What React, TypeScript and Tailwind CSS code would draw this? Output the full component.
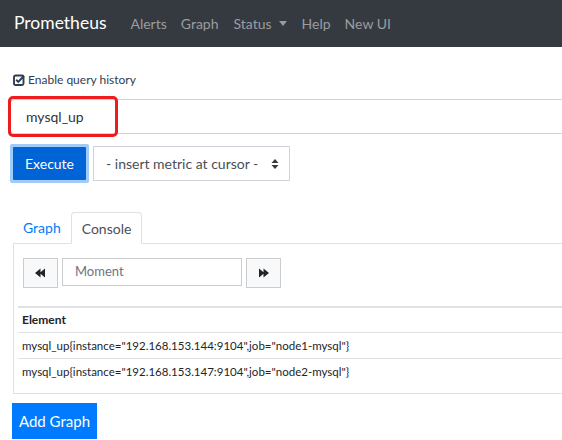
import React from 'react';

const font = { fontFamily: 'Lato, "Noto Sans", "Liberation Sans", sans-serif' };

const CheckSquare: React.FC = () => (
    <svg width="12" height="12" viewBox="0 0 12 12" className="shrink-0">
        <rect x="1" y="1.5" width="9.5" height="9.5" rx="1.5" fill="none" stroke="#2e3d4f" strokeWidth="1.9" />
        <path d="M3.2 5.8 L5.3 7.9 L11 1.8" fill="none" stroke="#2e3d4f" strokeWidth="2" />
    </svg>
);

const App: React.FC = () => {
    const rows = [
        'mysql_up{instance="192.168.153.144:9104",job="node1-mysql"}',
        'mysql_up{instance="192.168.153.147:9104",job="node2-mysql"}',
    ];

    return (
        <div className="w-[562px] h-[440px] overflow-hidden bg-white" style={font}>
            {/* navbar */}
            <div className="h-[47px] bg-[#343a40] flex items-center pl-[14px]">
                <span className="text-[17.5px] text-white mr-[24px]">Prometheus</span>
                <div className="flex items-center text-[14px] text-[#9a9da0]">
                    <span>Alerts</span>
                    <span className="ml-[14px]">Graph</span>
                    <span className="ml-[15px] flex items-center">
                        Status
                        <span className="ml-[7px] w-0 h-0 border-l-[4px] border-r-[4px] border-t-[5px] border-l-transparent border-r-transparent border-t-[#9a9da0]" />
                    </span>
                    <span className="ml-[15px]">Help</span>
                    <span className="ml-[14px]">New UI</span>
                </div>
            </div>

            <div className="w-[620px] pl-[10px]">
                <div className="flex items-center gap-[3px] h-[18px] mt-[24px] pl-[3px] text-[12px] text-[#2e3d4f]">
                    <CheckSquare />
                    <span>Enable query history</span>
                </div>

                {/* expression input */}
                <div className="relative mt-[10px]">
                    <div className="h-[35px] border border-[#ced4da] rounded-[4px] flex items-center pl-[15px] text-[14px] text-[#333]">
                        mysql_up
                    </div>
                    <div className="absolute left-[-2px] top-[-3px] w-[110px] h-[41px] border-[3px] border-[#ee1c1c] rounded-[5px]" />
                </div>

                <div className="flex items-center mt-[10px] gap-[4px]">
                    <div className="p-[3px] bg-[#9ecbf7] rounded-[2px]">
                        <button className="h-[33px] w-[73px] bg-[#0064d6] text-white text-[14px] rounded-[1px] flex items-center justify-center">
                            Execute
                        </button>
                    </div>
                    <div className="h-[35px] w-[197px] border border-[#ced4da] flex items-center justify-between pl-[12px] pr-[10px] text-[14px] text-[#495057]">
                        <span>- insert metric at cursor -</span>
                        <svg width="8" height="12" viewBox="0 0 8 12">
                            <path d="M4 1 L7.5 5 L0.5 5 Z M4 11 L7.5 7 L0.5 7 Z" fill="#343a40" />
                        </svg>
                    </div>
                </div>

                {/* tabs */}
                <div className="mt-[29px] ml-[3px]">
                    <div className="flex items-end h-[31px]">
                        <div className="h-[31px] pl-[10px] pr-[10px] flex items-center text-[14px] text-[#007bff]">Graph</div>
                        <div className="h-[32px] px-[10px] flex items-center text-[14px] text-[#495057] border border-[#dee2e6] border-b-white rounded-t-[4px] -mb-[1px] bg-white relative z-10">
                            Console
                        </div>
                    </div>
                    <div className="border border-[#dee2e6] border-r-0 h-[151px] pt-[14px]">
                        <div className="flex items-center gap-[4px] pl-[9px]">
                            <button className="w-[35px] h-[30px] bg-[#f8f9fa] border border-[#ccc] flex items-center justify-center">
                                <svg width="11" height="10" viewBox="0 0 11 10">
                                    <path d="M0 5 L5.5 0.5 L5.5 9.5 Z M4.5 5 L10 0.5 L10 9.5 Z" fill="#212529" />
                                </svg>
                            </button>
                            <div className="w-[180px] h-[28px] border border-[#ccc] flex items-center pl-[12px] text-[13px] text-[#6c757d] -mt-[2px]">
                                Moment
                            </div>
                            <button className="w-[35px] h-[30px] bg-[#f8f9fa] border border-[#ccc] flex items-center justify-center">
                                <svg width="11" height="10" viewBox="0 0 11 10">
                                    <path d="M11 5 L5.5 0.5 L5.5 9.5 Z M6.5 5 L1 0.5 L1 9.5 Z" fill="#212529" />
                                </svg>
                            </button>
                        </div>
                        <div className="ml-[4px] mt-[18px] text-[#212529]">
                            <div className="h-[26px] border-t-2 border-[#dee2e6] flex items-center pl-[4px] text-[12px] font-bold">Element</div>
                            {rows.map((r, i) => (
                                <div key={i} className="h-[26px] border-t border-[#dee2e6] flex items-center pl-[4px] text-[11.5px]">
                                    {r}
                                </div>
                            ))}
                        </div>
                    </div>
                </div>

                <button className="mt-[9px] ml-[2px] h-[36px] w-[85px] bg-[#007bff] text-white text-[15px] flex items-center justify-center">
                    Add Graph
                </button>
            </div>
        </div>
    );
};

export default App;
